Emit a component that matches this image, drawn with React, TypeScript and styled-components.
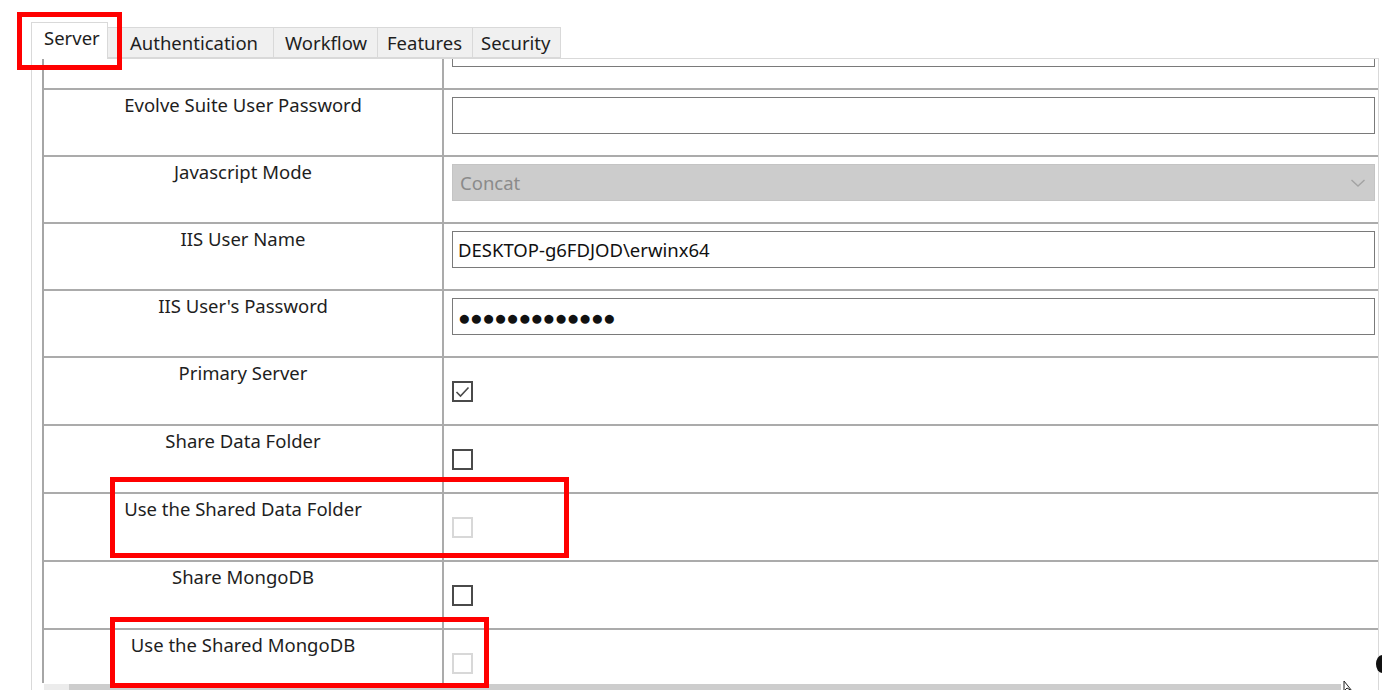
import React from 'react';
import styled, { createGlobalStyle } from 'styled-components';

const GlobalStyle = createGlobalStyle`
  html, body {
    margin: 0;
    padding: 0;
    background: #ffffff;
  }
  body {
    font-family: "Noto Sans", "Open Sans", sans-serif;
    color: #1a1a1a;
  }
`;

const Screen = styled.div`
  position: relative;
  width: 1382px;
  height: 690px;
  overflow: hidden;
  background: #ffffff;
`;

// Tab strip along the top
const TabStrip = styled.div`
  display: flex;
  align-items: flex-end;
  height: 58px;
  padding-left: 31px;
  box-sizing: border-box;
`;

const Tab = styled.div<{ $active?: boolean; $width: number; $inset: number }>`
  display: flex;
  align-items: center;
  box-sizing: border-box;
  width: ${(p) => p.$width}px;
  height: ${(p) => (p.$active ? 37 : 31)}px;
  margin-bottom: ${(p) => (p.$active ? -1 : 0)}px;
  padding-left: ${(p) => p.$inset}px;
  padding-bottom: ${(p) => (p.$active ? 8 : 0)}px;
  background: ${(p) => (p.$active ? '#ffffff' : '#f0f0f0')};
  border: 1px solid #d9d9d9;
  border-bottom: ${(p) => (p.$active ? 'none' : '1px solid #d9d9d9')};
  border-left: ${(p) => (p.$active ? '1px solid #d9d9d9' : 'none')};
  font-size: 18.5px;
  color: #1e1e1e;
  white-space: nowrap;
  position: relative;
  z-index: ${(p) => (p.$active ? 1 : 0)};
`;

const TabPage = styled.div`
  margin-left: 31px;
  width: 1348px;
  height: 632px;
  box-sizing: border-box;
  border: 1px solid #d9d9d9;
  border-bottom: none;
  padding-left: 10px;
  display: flex;
  flex-direction: column;
`;

// Scrolled area of the property grid
const Viewport = styled.div`
  height: 625px;
  overflow: hidden;
  border-left: 2px solid #a6a6a6;
`;

const Grid = styled.div`
  display: grid;
  grid-template-columns: 400px 935px;
  grid-template-rows: repeat(5, 67px) repeat(5, 68px);
  margin-top: -36px;
`;

const LabelCell = styled.div`
  box-sizing: border-box;
  border-bottom: 2px solid #ababab;
  border-right: 2px solid #ababab;
  padding-top: 2px;
  text-align: center;
  font-size: 18.5px;
  color: #1e1e1e;
  white-space: nowrap;
`;

const ValueCell = styled.div`
  box-sizing: border-box;
  border-bottom: 2px solid #ababab;
  padding: 7px 4px 0 8px;
`;

const TextBox = styled.div<{ $dots?: boolean }>`
  box-sizing: border-box;
  height: 37px;
  border: 1px solid #7a7a7a;
  background: #ffffff;
  display: flex;
  align-items: center;
  padding-left: 5px;
  font-size: ${(p) => (p.$dots ? 21 : 18.5)}px;
  letter-spacing: ${(p) => (p.$dots ? '-0.6px' : '0')};
  color: #111111;
  white-space: nowrap;
`;

const ComboBox = styled.div`
  box-sizing: border-box;
  height: 37px;
  background: #cccccc;
  border: 1px solid #c4c4c4;
  display: flex;
  align-items: center;
  justify-content: space-between;
  padding: 0 8px 0 7px;
  font-size: 18.5px;
  color: #8a8a8a;
`;

const CheckBox = styled.div<{ $disabled?: boolean }>`
  box-sizing: border-box;
  width: 21px;
  height: 21px;
  margin-top: 16px;
  border: 2px solid ${(p) => (p.$disabled ? '#d8d8d8' : '#4a4a4a')};
  background: #ffffff;
  display: flex;
  align-items: center;
  justify-content: center;
`;

const ScrollTrack = styled.div`
  display: flex;
  height: 6px;
  margin-top: 1px;
  margin-left: 2px;
`;

const ScrollEnd = styled.div<{ $width: number }>`
  width: ${(p) => p.$width}px;
  background: #ececec;
`;

const ScrollThumb = styled.div<{ $width: number }>`
  width: ${(p) => p.$width}px;
  background: #cdcdcd;
`;

// Annotation rectangles drawn over the screenshot
const Highlight = styled.div<{ $x: number; $y: number; $w: number; $h: number }>`
  position: absolute;
  left: ${(p) => p.$x}px;
  top: ${(p) => p.$y}px;
  width: ${(p) => p.$w}px;
  height: ${(p) => p.$h}px;
  box-sizing: border-box;
  border: 5px solid #ff0000;
  pointer-events: none;
`;

const EdgeBlob = styled.div`
  position: absolute;
  left: 1376px;
  top: 655px;
  width: 12px;
  height: 18px;
  border-radius: 50%;
  background: #111111;
`;

const Cursor = styled.svg`
  position: absolute;
  left: 1343px;
  top: 680px;
`;

type Row =
  | { label: string; kind: 'text'; value?: string }
  | { label: string; kind: 'password' }
  | { label: string; kind: 'combo'; value: string }
  | { label: string; kind: 'check'; checked?: boolean; disabled?: boolean };

// first row is scrolled mostly out of view, only its input's lower edge shows
const rows: Row[] = [
  { label: '', kind: 'text', value: '' },
  { label: 'Evolve Suite User Password', kind: 'text', value: '' },
  { label: 'Javascript Mode', kind: 'combo', value: 'Concat' },
  { label: 'IIS User Name', kind: 'text', value: 'DESKTOP-g6FDJOD\\erwinx64' },
  { label: "IIS User's Password", kind: 'password' },
  { label: 'Primary Server', kind: 'check', checked: true },
  { label: 'Share Data Folder', kind: 'check' },
  { label: 'Use the Shared Data Folder', kind: 'check', disabled: true },
  { label: 'Share MongoDB', kind: 'check' },
  { label: 'Use the Shared MongoDB', kind: 'check', disabled: true },
];

const tabs = [
  { name: 'Server', width: 77, inset: 12, active: true },
  { name: 'Authentication', width: 166, inset: 22 },
  { name: 'Workflow', width: 104, inset: 11 },
  { name: 'Features', width: 95, inset: 9 },
  { name: 'Security', width: 88, inset: 8 },
];

const Chevron = () => (
  <svg width="16" height="10" viewBox="0 0 16 10">
    <path d="M1.5 2 L8 8 L14.5 2" fill="none" stroke="#a3a3a3" strokeWidth="1.4" />
  </svg>
);

const Tick = () => (
  <svg width="15" height="12" viewBox="0 0 15 12">
    <path d="M1.5 6 L5.5 10 L13.5 1.5" fill="none" stroke="#4a4a4a" strokeWidth="1.6" />
  </svg>
);

const renderValue = (row: Row) => {
  switch (row.kind) {
    case 'text':
      return <TextBox>{row.value}</TextBox>;
    case 'password':
      return <TextBox $dots>{'●'.repeat(13)}</TextBox>;
    case 'combo':
      return (
        <ComboBox>
          <span>{row.value}</span>
          <Chevron />
        </ComboBox>
      );
    case 'check':
      return <CheckBox $disabled={row.disabled}>{row.checked && <Tick />}</CheckBox>;
  }
};

export default function App() {
  return (
    <Screen>
      <GlobalStyle />
      <TabStrip>
        {tabs.map((t) => (
          <Tab key={t.name} $active={t.active} $width={t.width} $inset={t.inset}>
            {t.name}
          </Tab>
        ))}
      </TabStrip>
      <TabPage>
        <Viewport>
          <Grid>
            {rows.map((row, i) => (
              <React.Fragment key={i}>
                <LabelCell>{row.label}</LabelCell>
                <ValueCell>{renderValue(row)}</ValueCell>
              </React.Fragment>
            ))}
          </Grid>
        </Viewport>
        <ScrollTrack>
          <ScrollEnd $width={25} />
          <ScrollThumb $width={1272} />
        </ScrollTrack>
      </TabPage>

      <Highlight $x={17} $y={12} $w={105} $h={58} />
      <Highlight $x={110} $y={477} $w={459} $h={81} />
      <Highlight $x={110} $y={617} $w={379} $h={71} />
      <EdgeBlob />
      <Cursor width="12" height="12" viewBox="0 0 12 12">
        <path d="M1 1 L1 11 L4 8 L9 11 Z" fill="#ffffff" stroke="#222" strokeWidth="1" />
      </Cursor>
    </Screen>
  );
}
